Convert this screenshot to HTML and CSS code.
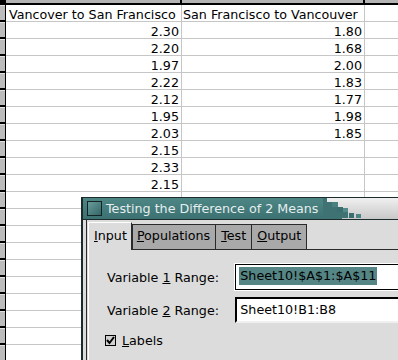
FILE: index.html
```html
<!DOCTYPE html>
<html lang="en">
<head>
 <meta charset="UTF-8">
 <title>Testing the Difference of 2 Means</title>
 <link rel="stylesheet" href="styles.css">
</head>
<body>
 <div class="sheet">
   <div class="colhead">
     <div class="corner"></div>
     <div class="ch ch-a"></div>
     <div class="ch ch-b"></div>
     <div class="ch ch-c"></div>
   </div>
   <div class="sheet-body">
     <div class="rowhead" id="rowhead"></div>
     <div class="grid" id="grid"></div>
   </div>
 </div>

 <div class="dialog">
   <div class="titlebar">
     <span class="title-icon"></span>
     <span class="title-text">Testing the Difference of 2 Means</span>
     <div class="title-end">
       <svg width="44" height="21" viewBox="0 0 44 21">
         <path d="M0 0H4V4H9V9H14V14H19V21H0Z" fill="#3f7373"/>
         <rect x="9" y="4" width="6" height="5" fill="#4a8080"/>
         <rect x="14" y="9" width="6" height="5" fill="#3b6f6f"/>
         <rect x="20" y="10" width="5" height="4" fill="#548a8a"/>
         <rect x="19" y="14" width="6" height="6" fill="#3f7373"/>
         <rect x="26" y="15" width="5" height="5" fill="#3b6f6f"/>
         <rect x="33" y="16" width="5" height="4" fill="#4d8585"/>
       </svg>
     </div>
   </div>
   <div class="content">
     <div class="tabs">
       <div class="tab active"><u>I</u>nput</div>
       <div class="tab first"><u>P</u>opulations</div>
       <div class="tab"><u>T</u>est</div>
       <div class="tab"><u>O</u>utput</div>
       <div class="tab-fill"></div>
     </div>
     <div class="panel">
       <div class="field-row">
         <label class="field-label">Variable <u>1</u> Range:</label>
         <div class="entry focus"><span class="sel">Sheet10!$A$1:$A$11</span></div>
       </div>
       <div class="field-row">
         <label class="field-label">Variable <u>2</u> Range:</label>
         <div class="entry">Sheet10!B1:B8</div>
       </div>
       <div class="check-row">
         <span class="checkbox">
           <svg width="9" height="9" viewBox="0 0 9 9"><path d="M1 4L3.5 7L8 1" stroke="#000" stroke-width="2" fill="none"/></svg>
         </span>
         <span><u>L</u>abels</span>
       </div>
     </div>
   </div>
 </div>

 <script>
   const rowhead = document.getElementById('rowhead');
   const grid = document.getElementById('grid');

   // datos de las dos columnas
   const colA = ['Vancover to San Francisco', '2.30', '2.20', '1.97', '2.22', '2.12', '1.95', '2.03', '2.15', '2.33', '2.15'];
   const colB = ['San Francisco to Vancouver', '1.80', '1.68', '2.00', '1.83', '1.77', '1.98', '1.85'];

   for (let i = 0; i < 21; i++) {
     const rh = document.createElement('div');
     rh.className = 'rh';
     rowhead.appendChild(rh);

     const row = document.createElement('div');
     row.className = 'row';
     const a = document.createElement('div');
     a.className = 'cell cell-a' + (i === 0 ? ' text' : '');
     a.textContent = colA[i] || '';
     const b = document.createElement('div');
     b.className = 'cell cell-b' + (i === 0 ? ' text' : '');
     b.textContent = colB[i] || '';
     const c = document.createElement('div');
     c.className = 'cell cell-c';
     row.appendChild(a);
     row.appendChild(b);
     row.appendChild(c);
     grid.appendChild(row);
   }
 </script>
</body>
</html>
```

FILE: styles.css
```css
body {
  margin: 0;
  width: 398px;
  height: 360px;
  overflow: hidden;
  background: #fff;
  font-family: "DejaVu Sans", sans-serif;
  font-size: 12.7px;
  color: #000;
}

.sheet {
  display: flex;
  flex-direction: column;
}

.colhead {
  display: flex;
  height: 5px;
  background: linear-gradient(#b4b4b4 0 3px, #000 3px);
}
.corner {
  width: 6px;
  background: #000;
}
.ch {
  box-sizing: border-box;
  border-right: 2px solid #000;
}
.ch-a { width: 176px; }
.ch-b { width: 183px; }
.ch-c { flex: 1; border: none; }

.sheet-body {
  display: flex;
}

.rowhead {
  width: 6px;
  box-sizing: border-box;
  border-right: 1px solid #000;
}
.rh {
  height: 17px;
  box-sizing: border-box;
  background: #bcbcbc;
  border-top: 1px solid #e0e0e0;
  border-bottom: 2px solid #000;
}

.grid {
  flex: 1;
}
.row {
  display: grid;
  grid-template-columns: 176px 183px 1fr;
}
.cell {
  height: 17px;
  box-sizing: border-box;
  border-right: 1px solid #c6c6c6;
  border-bottom: 1px solid #c6c6c6;
  padding: 2px 2px 0 0;
  line-height: 15px;
  text-align: right;
  white-space: nowrap;
  overflow: hidden;
}
.cell.text {
  text-align: left;
}
.cell-a.text { padding-left: 3px; }
.cell-b.text { padding-left: 1px; }
.cell-c { border-right: none; }

/* ventana del dialogo */
.dialog {
  position: absolute;
  left: 81px;
  top: 197px;
  width: 330px;
  height: 175px;
  background: #dcdcdc;
  border: 1px solid #1c2c2c;
  border-right: none;
  border-left-width: 2px;
  display: flex;
  flex-direction: column;
}

.titlebar {
  height: 21px;
  display: flex;
  align-items: center;
  background: linear-gradient(#4e8686, #3c7171);
  border-bottom: 1px solid #1c2c2c;
  color: #e4eeee;
}
.title-icon {
  width: 15px;
  height: 15px;
  box-sizing: border-box;
  margin-left: 4px;
  border: 1px solid #142424;
  background: linear-gradient(135deg, #6a9c9c, #336666);
}
.title-text {
  margin-left: 4px;
  line-height: 15px;
  white-space: nowrap;
}
.title-end {
  flex: 1;
  height: 21px;
  margin-left: 5px;
  display: flex;
  background: linear-gradient(#f0f0f0, #c8c8c8);
}

.content {
  flex: 1;
  margin-left: 3px;
  border-left: 1px solid #2a2a2a;
  padding: 2px 0 0 1px;
  display: flex;
  flex-direction: column;
}

.tabs {
  display: flex;
  align-items: flex-end;
}
.tab {
  box-sizing: border-box;
  height: 26px;
  padding: 3px 5px 0 5px;
  line-height: 15px;
  background: #a9a9a9;
  border: 1px solid #2a2a2a;
  border-left: none;
}
.tab.first {
  border-left: 1px solid #2a2a2a;
  padding-left: 4px;
}
.tab.active {
  height: 28px;
  padding: 5px 4px 0 5px;
  background: #dcdcdc;
  border: none;
  border-top: 1px solid #fff;
  border-left: 1px solid #fff;
  border-right: 1px solid #2a2a2a;
}
.tab-fill {
  flex: 1;
  border-bottom: 1px solid #2a2a2a;
}

.panel {
  flex: 1;
  border-left: 1px solid #fff;
  padding: 14px 0 0 18px;
  display: flex;
  flex-direction: column;
  gap: 7px;
}

.field-row {
  display: flex;
  align-items: center;
}
.field-label {
  width: 130px;
}
.entry {
  box-sizing: border-box;
  width: 180px;
  height: 26px;
  background: #fff;
  border: 2px solid #000;
  border-right-color: #f0f0f0;
  border-bottom-color: #f0f0f0;
  padding: 2px 0 0 3px;
  line-height: 18px;
  white-space: nowrap;
}
.entry.focus {
  border: 1px solid #000;
  outline: 1px solid #fff;
  padding: 2px 0 0 3px;
}
.sel {
  background: #558585;
  display: inline-block;
  padding: 0 1px;
}

.check-row {
  display: flex;
  align-items: center;
  gap: 6px;
  margin-top: 3px;
  margin-left: -2px;
}
.checkbox {
  width: 11px;
  height: 11px;
  box-sizing: border-box;
  border: 1px solid #000;
  background: #d0d0d0;
  display: flex;
  align-items: center;
  justify-content: center;
}
```
